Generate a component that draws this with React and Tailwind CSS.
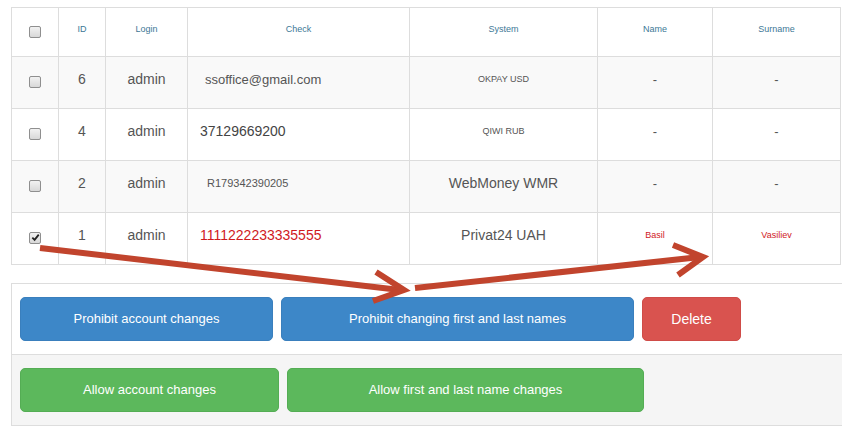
import React from "react";

const rows = [
  { id: 6, check: "ssoffice@gmail.com", checkCls: "text-[13px] pl-[17px] text-[#555]", sys: "OKPAY USD", sysCls: "text-[9px]", name: "-", sur: "-", striped: true, checked: false },
  { id: 4, check: "37129669200", checkCls: "text-[14px] pl-[12px] text-[#444]", sys: "QIWI RUB", sysCls: "text-[9px]", name: "-", sur: "-", striped: false, checked: false },
  { id: 2, check: "R179342390205", checkCls: "text-[11px] pl-[19px] text-[#555]", sys: "WebMoney WMR", sysCls: "text-[14px]", name: "-", sur: "-", striped: true, checked: false },
  { id: 1, check: "1111222233335555", checkCls: "text-[14px] pl-[12px] text-[#d0191e]", sys: "Privat24 UAH", sysCls: "text-[14px]", name: "Basil", sur: "Vasiliev", striped: false, checked: true, red: true },
];

function Box({ checked }) {
  return (
    <span className="inline-flex w-[12px] h-[12px] rounded-[2px] border border-[#8f8f8f] bg-gradient-to-b from-[#f2f2f2] to-[#d8d8d8] items-center justify-center align-middle">
      {checked && (
        <svg width="9" height="9" viewBox="0 0 10 10">
          <path d="M1.5 5.2 L4 7.6 L8.6 1.8" stroke="#222" strokeWidth="2" fill="none" />
        </svg>
      )}
    </span>
  );
}

const th = "border border-[#dddddd] font-normal text-[9px] text-[#3d7896] text-center align-middle pb-[5px]";
const td = "border border-[#dddddd] text-center align-middle text-[#555] pb-[6px]";

export default function App() {
  return (
    <div className="relative w-[842px] h-[435px] bg-white overflow-hidden" style={{ fontFamily: '"Liberation Sans", Arial, sans-serif' }}>
      <div className="pt-[7px] pl-[11px]">
        <table className="table-fixed border-collapse w-[829px]">
          <colgroup>
            <col className="w-[47px]" />
            <col className="w-[47px]" />
            <col className="w-[82px]" />
            <col className="w-[222px]" />
            <col className="w-[188px]" />
            <col className="w-[115px]" />
            <col className="w-[128px]" />
          </colgroup>
          <thead>
            <tr className="h-[49px]">
              <th className="border border-[#dddddd] text-center align-middle pb-[2px]"><Box /></th>
              <th className={th}>ID</th>
              <th className={th}>Login</th>
              <th className={th}>Check</th>
              <th className={th}>System</th>
              <th className={th}>Name</th>
              <th className={th}>Surname</th>
            </tr>
          </thead>
          <tbody>
            {rows.map((r) => (
              <tr key={r.id} className={`h-[52px] ${r.striped ? "bg-[#f9f9f9]" : "bg-white"}`}>
                <td className="border border-[#dddddd] text-center align-middle pb-[3px]"><Box checked={r.checked} /></td>
                <td className={`${td} text-[14px]`}>{r.id}</td>
                <td className={`${td} text-[14px]`}>admin</td>
                <td className={`border border-[#dddddd] text-left align-middle pb-[6px] ${r.checkCls}`}>{r.check}</td>
                <td className={`${td} ${r.sysCls}`}>{r.sys}</td>
                <td className={`${td} ${r.red ? "text-[9px] text-[#d0191e]" : "text-[13px]"}`}>{r.name}</td>
                <td className={`${td} ${r.red ? "text-[9px] text-[#d0191e]" : "text-[13px]"}`}>{r.sur}</td>
              </tr>
            ))}
          </tbody>
        </table>
      </div>

      <div className="mt-[18px] ml-[11px] w-[840px] border-t border-b border-l border-[#dddddd]">
        <div className="h-[71px] flex items-start pt-[13px] pl-[8px] gap-[8px] bg-white border-b border-[#dddddd]">
          <button className="w-[253px] h-[44px] rounded-[5px] bg-[#3d87c8] border border-[#3a7fbd] text-white text-[13px]">Prohibit account changes</button>
          <button className="w-[353px] h-[44px] rounded-[5px] bg-[#3d87c8] border border-[#3a7fbd] text-white text-[13px]">Prohibit changing first and last names</button>
          <button className="w-[99px] h-[44px] rounded-[5px] bg-[#d9534f] border border-[#cf4c48] text-white text-[14px]">Delete</button>
        </div>
        <div className="h-[70px] flex items-start pt-[13px] pl-[8px] gap-[8px] bg-[#f5f5f5]">
          <button className="w-[259px] h-[44px] rounded-[5px] bg-[#5cb85c] border border-[#54ad54] text-white text-[13px]">Allow account changes</button>
          <button className="w-[357px] h-[44px] rounded-[5px] bg-[#5cb85c] border border-[#54ad54] text-white text-[13px]">Allow first and last name changes</button>
        </div>
      </div>

      <svg className="absolute left-0 top-0 pointer-events-none" width="842" height="435" viewBox="0 0 842 435">
        <g fill="none" stroke="#c1442d" strokeWidth="6" strokeLinecap="butt" strokeLinejoin="miter">
          <path d="M40 248 L400 290" />
          <path d="M376 272 L404 290 L373 301" />
          <path d="M415 288 L700 257" />
          <path d="M673 245 L703 257 L678 275" />
        </g>
      </svg>
    </div>
  );
}
